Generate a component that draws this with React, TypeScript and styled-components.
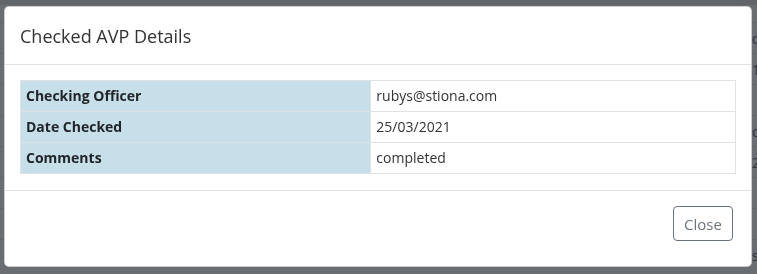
import styled, { createGlobalStyle } from "styled-components";

const GlobalStyle = createGlobalStyle`
  html, body {
    margin: 0;
    padding: 0;
    background: #6a6e72;
    overflow: hidden;
    font-family: "Open Sans", "Noto Sans", sans-serif;
  }
`;

interface DetailRow {
  label: string;
  value: string;
}

const rows: DetailRow[] = [
  { label: "Checking Officer", value: "rubys@stiona.com" },
  { label: "Date Checked", value: "25/03/2021" },
  { label: "Comments", value: "completed" },
];

// bits of the page table that peek out to the right of the dialog
const pageRows = ["d", "1", "", "o", "2", "", "", "s"];

const App = () => {
  return (
    <>
      <GlobalStyle />
      <Page>
        {pageRows.map((t, i) => (
          <PageRow key={i}>
            <PageCell>{t}</PageCell>
          </PageRow>
        ))}
      </Page>
      <Overlay>
        <Modal>
          <Header>
            <Title>Checked AVP Details</Title>
          </Header>
          <Body>
            <Table>
              <tbody>
                {rows.map((r) => (
                  <tr key={r.label}>
                    <Th>{r.label}</Th>
                    <Td>{r.value}</Td>
                  </tr>
                ))}
              </tbody>
            </Table>
          </Body>
          <Footer>
            <CloseButton>Close</CloseButton>
          </Footer>
        </Modal>
      </Overlay>
    </>
  );
};

const Page = styled.div`
  height: 100vh;
  overflow: hidden;
  display: flex;
  flex-direction: column;
  padding-top: 22px;
  box-sizing: border-box;
`;

const PageRow = styled.div`
  flex: none;
  height: 30px;
  border-top: 1px solid #62666a;
  display: flex;
  align-items: center;
`;

const PageCell = styled.span`
  padding-left: 752px;
  font-size: 14px;
  color: #2a3442;
  white-space: nowrap;
`;

const Overlay = styled.div`
  position: fixed;
  inset: 0;
  background: linear-gradient(to bottom, rgba(0, 0, 0, 0.08) 0 5px, transparent 5px);
  padding: 6px 0 0 4px;
`;

const Modal = styled.div`
  width: 748px;
  height: 261px;
  box-sizing: border-box;
  background: #fff;
  border: 1px solid rgba(0, 0, 0, 0.2);
  border-radius: 5px;
  display: flex;
  flex-direction: column;
  color: #212529;
`;

const Header = styled.div`
  padding: 16px 15px 15px;
  border-bottom: 1px solid #dee2e6;
`;

const Title = styled.h5`
  margin: 0;
  font-size: 18px;
  font-weight: 400;
  line-height: 26px;
  color: #333;
`;

const Body = styled.div`
  padding: 15px 15px 16px;
`;

const Table = styled.table`
  width: 100%;
  border-collapse: collapse;
  font-size: 14px;
`;

const Th = styled.th`
  width: 49%;
  text-align: left;
  font-weight: 700;
  background: #c6dfe9;
  border: 1px solid #dee2e6;
  padding: 4px 5px;
  line-height: 22px;
  color: #212529;
`;

const Td = styled.td`
  border: 1px solid #dee2e6;
  padding: 4px 5px;
  line-height: 22px;
  color: #333;
`;

const Footer = styled.div`
  flex: 1;
  border-top: 1px solid #dee2e6;
  display: flex;
  justify-content: flex-end;
  align-items: flex-start;
  padding: 15px 18px 0 0;
`;

const CloseButton = styled.button`
  width: 60px;
  height: 35px;
  padding: 0;
  font-family: "Open Sans", "Noto Sans", sans-serif;
  font-size: 15px;
  color: #6c757d;
  background: transparent;
  border: 1px solid #6c757d;
  border-radius: 4px;
  cursor: pointer;
`;

export default App;
